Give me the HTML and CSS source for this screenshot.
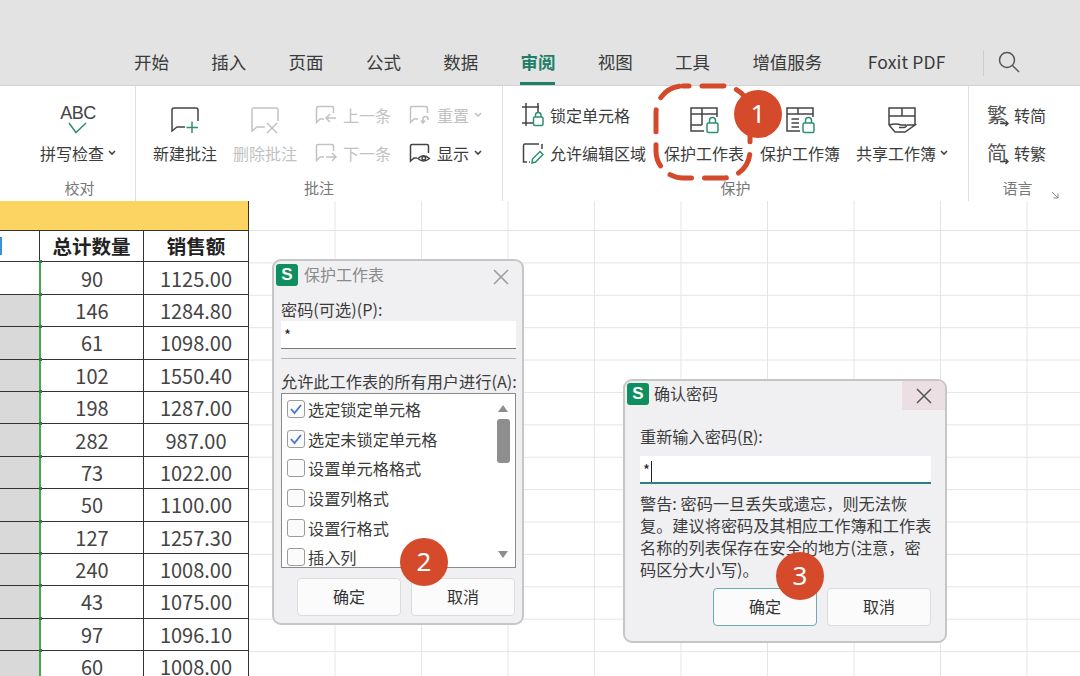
FILE: index.html
```html
<!DOCTYPE html>
<html>
<head>
  <meta charset="utf-8"/>
  <title>保护工作表</title>
  <link rel="stylesheet" href="styles.css">
</head>
<body>
<div class="page">

  <!-- ---------- TABS ---------- -->
  <div class="tabbar">
    <a class="tab">开始</a>
    <a class="tab">插入</a>
    <a class="tab">页面</a>
    <a class="tab">公式</a>
    <a class="tab">数据</a>
    <a class="tab active">审阅</a>
    <a class="tab">视图</a>
    <a class="tab">工具</a>
    <a class="tab">增值服务</a>
    <a class="tab tab-foxit">Foxit PDF</a>
    <span class="tab-divider"></span>
    <svg class="search" width="24" height="24" viewBox="0 0 24 24"><circle cx="10" cy="10" r="7.5"/><path d="M15.5 15.5L22 22"/></svg>
  </div>

  <!-- ---------- RIBBON ---------- -->
  <div class="ribbon">
    <div class="group group-check">
      <div class="group-body">
        <div class="big">
          <div class="big-icon abc">
            <span class="abc-text">ABC</span>
            <svg width="24" height="12" viewBox="0 0 24 12"><path class="green" d="M3 1L10 10.500L20 1"/></svg>
          </div>
          <div class="big-label">拼写检查<svg class="chev" width="8" height="6" viewBox="0 0 8 6"><path d="M1 1L4 4L7 1"/></svg></div>
        </div>
      </div>
      <div class="group-label">校对</div>
    </div>

    <div class="group group-notes">
      <div class="group-body">
        <div class="big">
          <div class="big-icon">
            <svg class="ico" width="30" height="28" viewBox="0 0 30 28"><path d="M15 21H7L2 25V4Q2 2 4 2H26Q28 2 28 4V15"/><path class="green" d="M22 15.5V27M16.5 21.5H28"/></svg>
          </div>
          <div class="big-label">新建批注</div>
        </div>
        <div class="big off">
          <div class="big-icon">
            <svg class="ico" width="30" height="28" viewBox="0 0 30 28"><path d="M15 21H7L2 25V4Q2 2 4 2H26Q28 2 28 4V15M17 17L27 27M27 17L17 27"/></svg>
          </div>
          <div class="big-label">删除批注</div>
        </div>
        <div class="small-col notes-nav">
          <div class="small off">
            <svg class="ico" width="22" height="20" viewBox="0 0 22 20"><path d="M9 14H5L1.500 17.500V3Q1.500 1.500 3 1.500H17Q18.500 1.500 18.500 3V8M21 13H11M15 9L11 13L15 17"/></svg>上一条
          </div>
          <div class="small off">
            <svg class="ico" width="22" height="20" viewBox="0 0 22 20"><path d="M9 14H5L1.500 17.500V3Q1.500 1.500 3 1.500H17Q18.500 1.500 18.500 3V8M11 14H21M17 10L21 14L17 18"/></svg>下一条
          </div>
        </div>
        <div class="small-col">
          <div class="small off">
            <svg class="ico" width="22" height="20" viewBox="0 0 22 20"><path d="M9 14H5L1.500 17.500V3Q1.500 1.500 3 1.500H17Q18.500 1.500 18.500 3V8M14 18V14Q14 11.500 16.500 11.500T19 14V15M12 15.500L14 18L16 15.500"/></svg>重置<svg class="chev chev-wide" width="8" height="6" viewBox="0 0 8 6"><path d="M1 1L4 4L7 1"/></svg>
          </div>
          <div class="small">
            <svg class="ico" width="22" height="20" viewBox="0 0 22 20"><path d="M8 15H5L1.500 18V3Q1.500 1.500 3 1.500H18Q19.500 1.500 19.500 3V10"/><path d="M9 15.500Q14.500 10 20.500 15.500Q14.500 20.500 9 15.500Z"/><circle cx="14.800" cy="15.300" r="1.800"/></svg>显示<svg class="chev chev-wide" width="8" height="6" viewBox="0 0 8 6"><path d="M1 1L4 4L7 1"/></svg>
          </div>
        </div>
      </div>
      <div class="group-label">批注</div>
    </div>

    <div class="group group-protect">
      <div class="group-body">
        <div class="small-col cells-col">
          <div class="small">
            <svg class="ico" width="22" height="24" viewBox="0 0 22 24"><path d="M0 4H17M0 20H11M4 0V23M16 0V10"/><rect class="green" x="11.500" y="14" width="9.500" height="8.500" rx="1.500"/><path class="green" d="M13.500 14V12Q13.500 9.500 16.200 9.500T19 12V14"/></svg>锁定单元格
          </div>
          <div class="small">
            <svg class="ico" width="22" height="24" viewBox="0 0 22 24"><path d="M17 3H3Q1.500 3 1.500 4.500V21H5M20 3V8M7 21H8"/><path class="green" d="M10 22L10.500 18L18 10.500L21 13.500L13.500 21Z"/></svg>允许编辑区域
          </div>
        </div>
        <div class="big wide">
          <div class="big-icon">
            <svg class="ico" width="30" height="28" viewBox="0 0 30 28"><path d="M15 25H2V2H28V11M2 8H28M13 2V19M2 19H13"/><rect class="green" x="18" y="17" width="11" height="9.500" rx="1.500"/><path class="green" d="M20.500 17V14.500Q20.500 11.500 23.500 11.500T26.500 14.500V17"/></svg>
          </div>
          <div class="big-label">保护工作表</div>
        </div>
        <div class="big wide">
          <div class="big-icon">
            <svg class="ico" width="30" height="28" viewBox="0 0 30 28"><path d="M15 25H2V2H28V11M2 8H28M13 2V8M6.500 13H14M6.500 17H14M6.500 21H14"/><rect class="green" x="18" y="17" width="11" height="9.500" rx="1.500"/><path class="green" d="M20.500 17V14.500Q20.500 11.500 23.500 11.500T26.500 14.500V17"/></svg>
          </div>
          <div class="big-label">保护工作簿</div>
        </div>
        <div class="big share">
          <div class="big-icon">
            <svg class="ico" width="30" height="28" viewBox="0 0 30 28"><path d="M2 19V2H28V19M2 10H28M15 2V10"/><path d="M2 19Q9 17 14 19H19Q20 21 17 21.500H12M2 19L8 26H18L28 19H20"/></svg>
          </div>
          <div class="big-label">共享工作簿<svg class="chev" width="8" height="6" viewBox="0 0 8 6"><path d="M1 1L4 4L7 1"/></svg></div>
        </div>
      </div>
      <div class="group-label">保护</div>
    </div>

    <div class="group group-lang">
      <div class="group-body">
        <div class="small-col">
          <div class="small lang">
            <span class="lang-char">繁<svg class="ico lang-arrow" width="9" height="7" viewBox="0 0 9 7"><path d="M0 3.500H8M5.500 1L8 3.500L5.500 6"/></svg></span>转简
          </div>
          <div class="small lang">
            <span class="lang-char">简<svg class="ico lang-arrow" width="9" height="7" viewBox="0 0 9 7"><path d="M0 3.500H8M5.500 1L8 3.500L5.500 6"/></svg></span>转繁
          </div>
        </div>
      </div>
      <div class="group-label">语言</div>
      <svg class="launcher" width="8" height="8" viewBox="0 0 8 8"><path d="M1 1L7 7M7 2.500V7H2.500"/></svg>
    </div>
  </div>

  <!-- ---------- SHEET ---------- -->
  <div class="sheet">
    <div class="table">
      <div class="banner"></div>
      <div class="row head">
        <div class="c1"><span class="sel-mark"></span></div>
        <div class="c2">总计数量</div>
        <div class="c3">销售额</div>
      </div>
      <div class="row first"><div class="c1"></div><div class="c2">90</div><div class="c3">1125.00</div></div>
      <div class="row"><div class="c1"></div><div class="c2">146</div><div class="c3">1284.80</div></div>
      <div class="row"><div class="c1"></div><div class="c2">61</div><div class="c3">1098.00</div></div>
      <div class="row"><div class="c1"></div><div class="c2">102</div><div class="c3">1550.40</div></div>
      <div class="row"><div class="c1"></div><div class="c2">198</div><div class="c3">1287.00</div></div>
      <div class="row"><div class="c1"></div><div class="c2">282</div><div class="c3">987.00</div></div>
      <div class="row"><div class="c1"></div><div class="c2">73</div><div class="c3">1022.00</div></div>
      <div class="row"><div class="c1"></div><div class="c2">50</div><div class="c3">1100.00</div></div>
      <div class="row"><div class="c1"></div><div class="c2">127</div><div class="c3">1257.30</div></div>
      <div class="row"><div class="c1"></div><div class="c2">240</div><div class="c3">1008.00</div></div>
      <div class="row"><div class="c1"></div><div class="c2">43</div><div class="c3">1075.00</div></div>
      <div class="row"><div class="c1"></div><div class="c2">97</div><div class="c3">1096.10</div></div>
      <div class="row"><div class="c1"></div><div class="c2">60</div><div class="c3">1008.00</div></div>
    </div>
  </div>

  <!-- ---------- DIALOG: PROTECT SHEET ---------- -->
  <div class="dialog dialog-protect">
    <div class="dialog-title muted">
      <span class="app-logo">S</span>
      <span class="dialog-name">保护工作表</span>
      <svg class="close" width="16" height="16" viewBox="0 0 16 16"><path d="M1 1L15 15M15 1L1 15"/></svg>
    </div>
    <div class="dialog-body">
      <div class="field-label label-pass">密码(可选)(P):</div>
      <div class="input">*</div>
      <div class="rule"></div>
      <div class="field-label label-allow">允许此工作表的所有用户进行(A):</div>
      <div class="list">
        <div class="list-items">
          <div class="list-item"><span class="box"><svg width="14" height="12" viewBox="0 0 14 12"><path d="M2 6L5.500 10L12 2"/></svg></span>选定锁定单元格</div>
          <div class="list-item"><span class="box"><svg width="14" height="12" viewBox="0 0 14 12"><path d="M2 6L5.500 10L12 2"/></svg></span>选定未锁定单元格</div>
          <div class="list-item"><span class="box"></span>设置单元格格式</div>
          <div class="list-item"><span class="box"></span>设置列格式</div>
          <div class="list-item"><span class="box"></span>设置行格式</div>
          <div class="list-item"><span class="box"></span>插入列</div>
        </div>
        <div class="scrollbar">
          <span class="arrow-up"></span>
          <span class="thumb"></span>
          <span class="arrow-down"></span>
        </div>
      </div>
      <div class="buttons buttons-protect">
        <div class="btn">确定</div>
        <div class="btn">取消</div>
      </div>
    </div>
  </div>

  <!-- ---------- DIALOG: CONFIRM PASSWORD ---------- -->
  <div class="dialog dialog-confirm">
    <div class="dialog-title">
      <span class="app-logo">S</span>
      <span class="dialog-name">确认密码</span>
      <span class="close-hover"><svg class="close" width="16" height="16" viewBox="0 0 16 16"><path d="M1 1L15 15M15 1L1 15"/></svg></span>
    </div>
    <div class="dialog-body confirm-body">
      <div class="field-label label-repeat">重新输入密码(<u>R</u>):</div>
      <div class="input input-focus">*<span class="caret"></span></div>
      <p class="warning">警告: 密码一旦丢失或遗忘，则无法恢复。建议将密码及其相应工作簿和工作表名称的列表保存在安全的地方(注意，密码区分大小写)。</p>
      <div class="buttons buttons-confirm">
        <div class="btn btn-primary">确定</div>
        <div class="btn">取消</div>
      </div>
    </div>
  </div>

  <!-- ---------- ANNOTATIONS ---------- -->
  <svg class="ring" width="110" height="106" viewBox="0 0 110 106"><rect x="7" y="7" width="94" height="92" rx="27"/></svg>
  <div class="badge badge-1">1</div>
  <div class="badge badge-2">2</div>
  <div class="badge badge-3">3</div>
</div>
</body>
</html>
```

FILE: styles.css
```css
/* Basic reset */
* {
  box-sizing: border-box;
  margin: 0;
  padding: 0;
}
body {
  font-family: "Noto Sans CJK SC", "Noto Sans", sans-serif;
  background: #fff;
  color: #3c3c3c;
}
.page {
  position: relative;
  width: 1080px;
  height: 676px;
  overflow: hidden;
}

/* ---------- TABS ---------- */
.tabbar {
  display: flex;
  align-items: flex-start;
  height: 86px;
  padding: 48px 0 0 134px;
  gap: 42.300px;
  background: #e3e3e3;
  border-bottom: 1px solid #d2d2d2;
}
.tab {
  height: 37px;
  line-height: 28px;
  font-size: 17.500px;
  color: #3a3a3a;
}
.tab.active {
  color: #1d7f68;
  font-weight: 700;
  border-bottom: 3px solid #1d7f68;
}
.tab-foxit {
  margin-left: 3px;
  letter-spacing: 0.150px;
}
.tab-divider {
  width: 1px;
  height: 26px;
  margin: 2px 0 0 -5px;
  background: #cdcdcd;
}
.search {
  margin: 2px 0 0 -29px;
  fill: none;
  stroke: #555;
  stroke-width: 1.500;
}

/* ---------- RIBBON ---------- */
.ribbon {
  display: flex;
  height: 115px;
  background: #fff;
}
.group {
  position: relative;
  padding-top: 14px;
}
.group-body {
  display: flex;
  height: 66px;
}
.group-label {
  height: 24px;
  margin-top: 10px;
  line-height: 24px;
  text-align: center;
  font-size: 15px;
  color: #777;
}
.group-check, .group-notes, .group-protect {
  border-right: 1px solid #e0e0e0;
}
.group-check {
  width: 136px;
  padding-left: 24px;
}
.group-check .group-body {
  padding-left: 22px;
}
.group-notes {
  width: 367px;
}
.group-notes .group-body {
  padding-left: 17px;
  gap: 16px;
}
.group-protect {
  width: 466px;
}
.group-protect .group-body {
  padding-left: 19px;
  gap: 16px;
}
.group-lang {
  width: 111px;
  padding-right: 14px;
}
.group-lang .group-body {
  padding-left: 18px;
}

.big {
  display: flex;
  flex-direction: column;
  align-items: center;
  gap: 7px;
  width: 64px;
}
.big.wide {
  width: 80px;
}
.big.share {
  width: 92px;
}
.big-icon {
  display: flex;
  align-items: flex-end;
  justify-content: center;
  height: 34px;
}
.big-label {
  display: flex;
  align-items: center;
  height: 24px;
  font-size: 16px;
  white-space: nowrap;
}
.off {
  color: #c2c2c2;
}
.off .ico path, .off .chev path {
  stroke: #c2c2c2;
}
.ico {
  fill: none;
  stroke: #444;
  stroke-width: 1.500;
  flex: none;
}
.green, .ico .green {
  fill: none;
  stroke: #2f8f74;
  stroke-width: 1.500;
}
.chev {
  margin-left: 4px;
  fill: none;
  stroke: #444;
  stroke-width: 1.600;
  flex: none;
}
.chev-wide {
  margin-left: -1px;
}
.abc {
  flex-direction: column;
  align-items: center;
  justify-content: flex-start;
  padding-top: 3px;
}
.abc-text {
  font-family: "Liberation Sans", sans-serif;
  font-size: 18px;
  line-height: 20px;
  letter-spacing: -0.500px;
  color: #444;
}
.abc svg {
  margin-top: -1px;
}

.small-col {
  display: flex;
  flex-direction: column;
  gap: 14px;
  padding-top: 3px;
}
.notes-nav {
  width: 78px;
  margin-left: 2px;
}
.cells-col {
  width: 126px;
}
.small {
  display: flex;
  align-items: center;
  gap: 6px;
  height: 24px;
  font-size: 16px;
  white-space: nowrap;
}
.lang {
  gap: 7px;
}
.lang-char {
  position: relative;
  font-size: 20px;
  line-height: 24px;
  color: #555;
}
.lang-arrow {
  position: absolute;
  right: -2px;
  bottom: 0;
}
.launcher {
  position: absolute;
  right: 21px;
  bottom: 2px;
  fill: none;
  stroke: #888;
}

/* ---------- SHEET ---------- */
.sheet {
  height: 475px;
  background-color: #fff;
  background-image:
    linear-gradient(to right, #e4e4e4 1px, transparent 1px),
    linear-gradient(to bottom, #e4e4e4 1px, transparent 1px);
  background-size: 86.500px 32.400px;
  background-position: 248px 0, 0 29px;
}
.table {
  width: 249px;
}
.banner {
  height: 29px;
  background: #fcd462;
  border-right: 1px solid #333;
}
.row {
  display: flex;
  height: 32.400px;
  border-bottom: 1px solid #333;
  font-size: 20px;
  color: #444;
}
.row > div {
  display: flex;
  align-items: center;
  justify-content: center;
  border-right: 1px solid #333;
  background: #fff;
}
.head {
  border-top: 1px solid #333;
  font-weight: 700;
  font-size: 19.500px;
  color: #222;
}
.row.head > div {
  padding-bottom: 1px;
}
.row .c1 {
  position: relative;
  width: 41px;
  justify-content: flex-start;
  background: #d9d9d9;
  border-right: 2px solid #46a84e;
}
.row .c1::after {
  content: "";
  position: absolute;
  top: -2px;
  right: -3px;
  width: 3px;
  height: 3px;
  background: #2e8b3a;
}
.row.first .c1 {
  background: #fff;
}
.row.head .c1 {
  width: 40px;
  background: #fff;
  border-right: 1px solid #333;
}
.row.head .c1::after {
  display: none;
}
.c2 {
  width: 103px;
}
.head .c2 {
  width: 104px;
}
.c3 {
  width: 105px;
}
.sel-mark {
  width: 2px;
  height: 18px;
  background: #3d8fd6;
}

/* ---------- DIALOGS ---------- */
.dialog {
  position: absolute;
  overflow: hidden;
  background: #f0f0f2;
  border: 2px solid #c6c6c6;
  border-radius: 9px;
}
.dialog-protect {
  left: 272px;
  top: 259px;
  width: 252px;
  height: 366px;
}
.dialog-confirm {
  left: 623px;
  top: 379px;
  width: 324px;
  height: 264px;
}
.dialog-title {
  display: flex;
  align-items: flex-start;
  height: 29px;
  padding: 3px 0 0 2px;
}
.dialog-confirm .dialog-title {
  padding-top: 2px;
}
.app-logo {
  width: 22px;
  height: 22px;
  border-radius: 3px;
  background: #0f8f5f;
  color: #fff;
  font-family: "Liberation Sans", sans-serif;
  font-size: 17px;
  font-weight: 700;
  line-height: 21px;
  text-align: center;
}
.dialog-name {
  margin-left: 5px;
  font-size: 16px;
  line-height: 21px;
}
.muted .dialog-name {
  margin-left: 6px;
  color: #8a8a8a;
}
.close {
  margin: 5px 0 0 auto;
  fill: none;
  stroke: #9a9a9a;
  stroke-width: 1.500;
}
.muted .close {
  margin-right: 13px;
}
.close-hover {
  display: flex;
  align-items: center;
  justify-content: center;
  width: 43px;
  height: 29px;
  margin: -2px 0 0 auto;
  background: #ecdfe3;
}
.close-hover .close {
  margin: 0;
  stroke: #555;
}
.dialog-body {
  padding: 0 6px 0 7px;
}
.confirm-body {
  padding: 0 14px 0 15px;
}
.field-label {
  height: 20px;
  line-height: 20px;
  font-size: 16.200px;
  white-space: nowrap;
}
.label-pass {
  margin-top: 9px;
}
.label-allow {
  margin-top: 12px;
}
.label-repeat {
  margin-top: 16px;
}
.input {
  height: 28px;
  margin-top: 2px;
  padding-left: 3px;
  background: #fff;
  border-bottom: 1px solid #777;
  font-size: 15px;
  line-height: 28px;
  color: #222;
}
.input-focus {
  margin-top: 10px;
  border-bottom: 2px solid #2d7d8a;
}
.caret {
  display: inline-block;
  width: 1px;
  height: 21px;
  margin-left: 1px;
  background: #222;
  vertical-align: middle;
}
.rule {
  height: 1px;
  margin-top: 9px;
  background: #b4b4b4;
}
.list {
  display: flex;
  height: 175px;
  margin-top: 2px;
  overflow: hidden;
  background: #fff;
  border: 1px solid #8a8a8a;
}
.list-items {
  flex: 1;
}
.list-item {
  display: flex;
  align-items: center;
  height: 29.700px;
  padding-left: 5px;
  font-size: 16.200px;
  white-space: nowrap;
}
.box {
  display: flex;
  align-items: center;
  justify-content: center;
  width: 18px;
  height: 18px;
  margin-right: 3px;
  background: #fbfbfb;
  border: 1px solid #9c9c9c;
  border-radius: 3px;
}
.box svg {
  fill: none;
  stroke: #4a76c9;
  stroke-width: 1.800;
}
.scrollbar {
  display: flex;
  flex-direction: column;
  align-items: center;
  width: 24px;
  padding-top: 11px;
}
.arrow-up, .arrow-down {
  width: 0;
  height: 0;
  border-left: 5px solid transparent;
  border-right: 5px solid transparent;
}
.arrow-up {
  border-bottom: 7px solid #8d8d8d;
}
.arrow-down {
  margin-top: 88px;
  border-top: 7px solid #8d8d8d;
}
.thumb {
  width: 13px;
  height: 44px;
  margin-top: 7px;
  border-radius: 3px;
  background: #8e8e8e;
}
.buttons {
  display: flex;
  gap: 10px;
  margin-top: 10px;
}
.buttons-protect {
  padding-left: 16px;
}
.buttons-confirm {
  justify-content: flex-end;
  margin-top: 8px;
}
.btn {
  width: 104px;
  height: 38px;
  background: #fbfbfb;
  border: 1px solid #dcdcdc;
  border-radius: 4px;
  font-size: 16px;
  line-height: 35px;
  text-align: center;
  color: #333;
}
.btn-primary {
  border: 1.500px solid #66aeb0;
}
.warning {
  margin: 8px -3px 0 0;
  font-size: 16.200px;
  line-height: 22px;
}

/* ---------- ANNOTATIONS ---------- */
.ring {
  position: absolute;
  left: 649px;
  top: 79px;
  fill: none;
  stroke: #d4492b;
  stroke-width: 5;
  stroke-linecap: round;
  stroke-dasharray: 22 13;
  stroke-dashoffset: -19;
}
.badge {
  position: absolute;
  width: 48px;
  height: 48px;
  border-radius: 50%;
  background: #d64a2c;
  color: #fff;
  font-family: "Noto Sans", sans-serif;
  font-size: 26px;
  line-height: 47px;
  text-align: center;
}
.badge-1 {
  left: 734px;
  top: 90px;
}
.badge-2 {
  left: 400px;
  top: 538px;
}
.badge-3 {
  left: 776px;
  top: 552px;
}
```
